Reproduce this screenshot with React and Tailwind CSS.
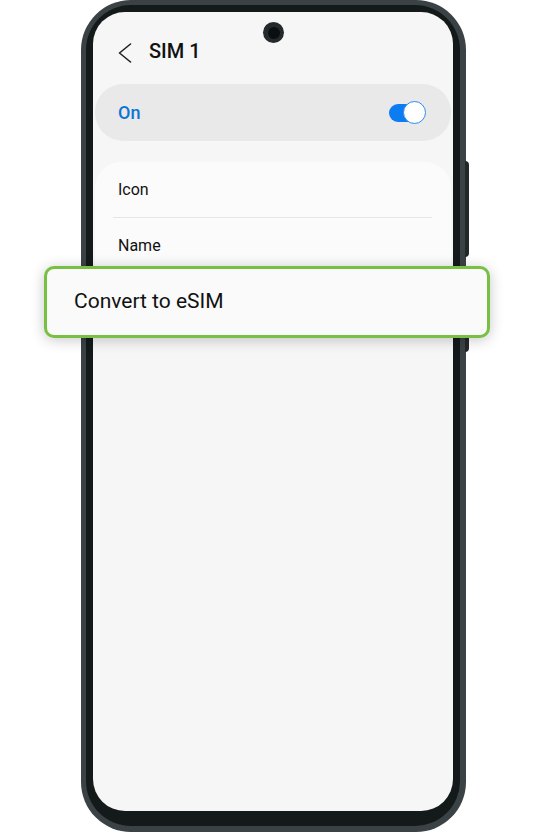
const FONT = { fontFamily: "Roboto, 'Noto Sans', sans-serif" };

function Toggle() {
  return (
    <div className="relative flex h-[23px] w-[37px] items-center">
      <div className="h-[18px] w-[32px] rounded-full bg-[#0b7cf2]" />
      <div className="absolute right-0 top-0 h-[23px] w-[23px] rounded-full border border-[#2b8cf4] bg-white" />
    </div>
  );
}

function Row({ label, divider }) {
  return (
    <div className="relative flex h-[56px] items-center px-[23px]">
      <span className="text-[16px] text-[#111]">{label}</span>
      {divider && <div className="absolute bottom-0 left-[18px] right-[19px] h-px bg-[#e6e6e6]" />}
    </div>
  );
}

export default function App() {
  return (
    <div className="relative h-[832px] w-[550px] overflow-hidden bg-white" style={FONT}>
      {/* side buttons */}
      <div className="absolute left-[465px] top-[161px] h-[96px] w-[4px] rounded-r-sm bg-[#22272a]" />
      <div className="absolute left-[465px] top-[300px] h-[52px] w-[4px] rounded-r-sm bg-[#22272a]" />

      <div className="ml-[81px] h-[832px] w-[385px] rounded-[50px] bg-[#3a4245] pb-[6px] pl-[5px] pr-[6px] pt-[5px]">
        <div className="h-full w-full rounded-[45px] bg-[#141919] px-[7px] pb-[15px] pt-[7px]">
          <div className="relative h-full w-full overflow-hidden rounded-[32px] bg-[#f6f6f6]">
            {/* camera */}
            <div className="absolute left-[170px] top-[10px] flex h-[21px] w-[21px] items-center justify-center rounded-full bg-[#24292b]">
              <div className="h-[12px] w-[12px] rounded-full bg-[#0c0f10]" />
            </div>

            <div className="flex h-[65px] items-end pb-[11px] pl-[25px]">
              <svg width="14" height="20" viewBox="0 0 14 20" className="mb-[3px]" fill="none">
                <polyline points="12.5,1 1.5,10 12.5,19" stroke="#222" strokeWidth="1.6" strokeLinecap="round" strokeLinejoin="round" />
              </svg>
              <span className="ml-[17px] text-[20px] font-medium text-[#111]">SIM 1</span>
            </div>

            <div className="mx-[2px] mt-[7px] flex h-[57px] items-center justify-between rounded-[28px] bg-[#e9e9e9] pl-[23px] pr-[25px]">
              <span className="text-[18px] font-medium text-[#0b74d6]">On</span>
              <Toggle />
            </div>

            <div className="mx-[2px] mt-[21px] rounded-[26px] bg-[#fbfbfb] pb-[56px]">
              <Row label="Icon" divider />
              <Row label="Name" />
            </div>
          </div>
        </div>
      </div>

      {/* highlighted menu item */}
      <div className="absolute left-[44px] top-[266px] flex h-[72px] w-[446px] items-center rounded-[10px] border-[3px] border-[#78c043] bg-[#fafafa] pl-[27px] shadow-[0_2px_14px_rgba(0,0,0,0.22)]">
        <span className="text-[21px] text-[#111]">Convert to eSIM</span>
      </div>
    </div>
  );
}
